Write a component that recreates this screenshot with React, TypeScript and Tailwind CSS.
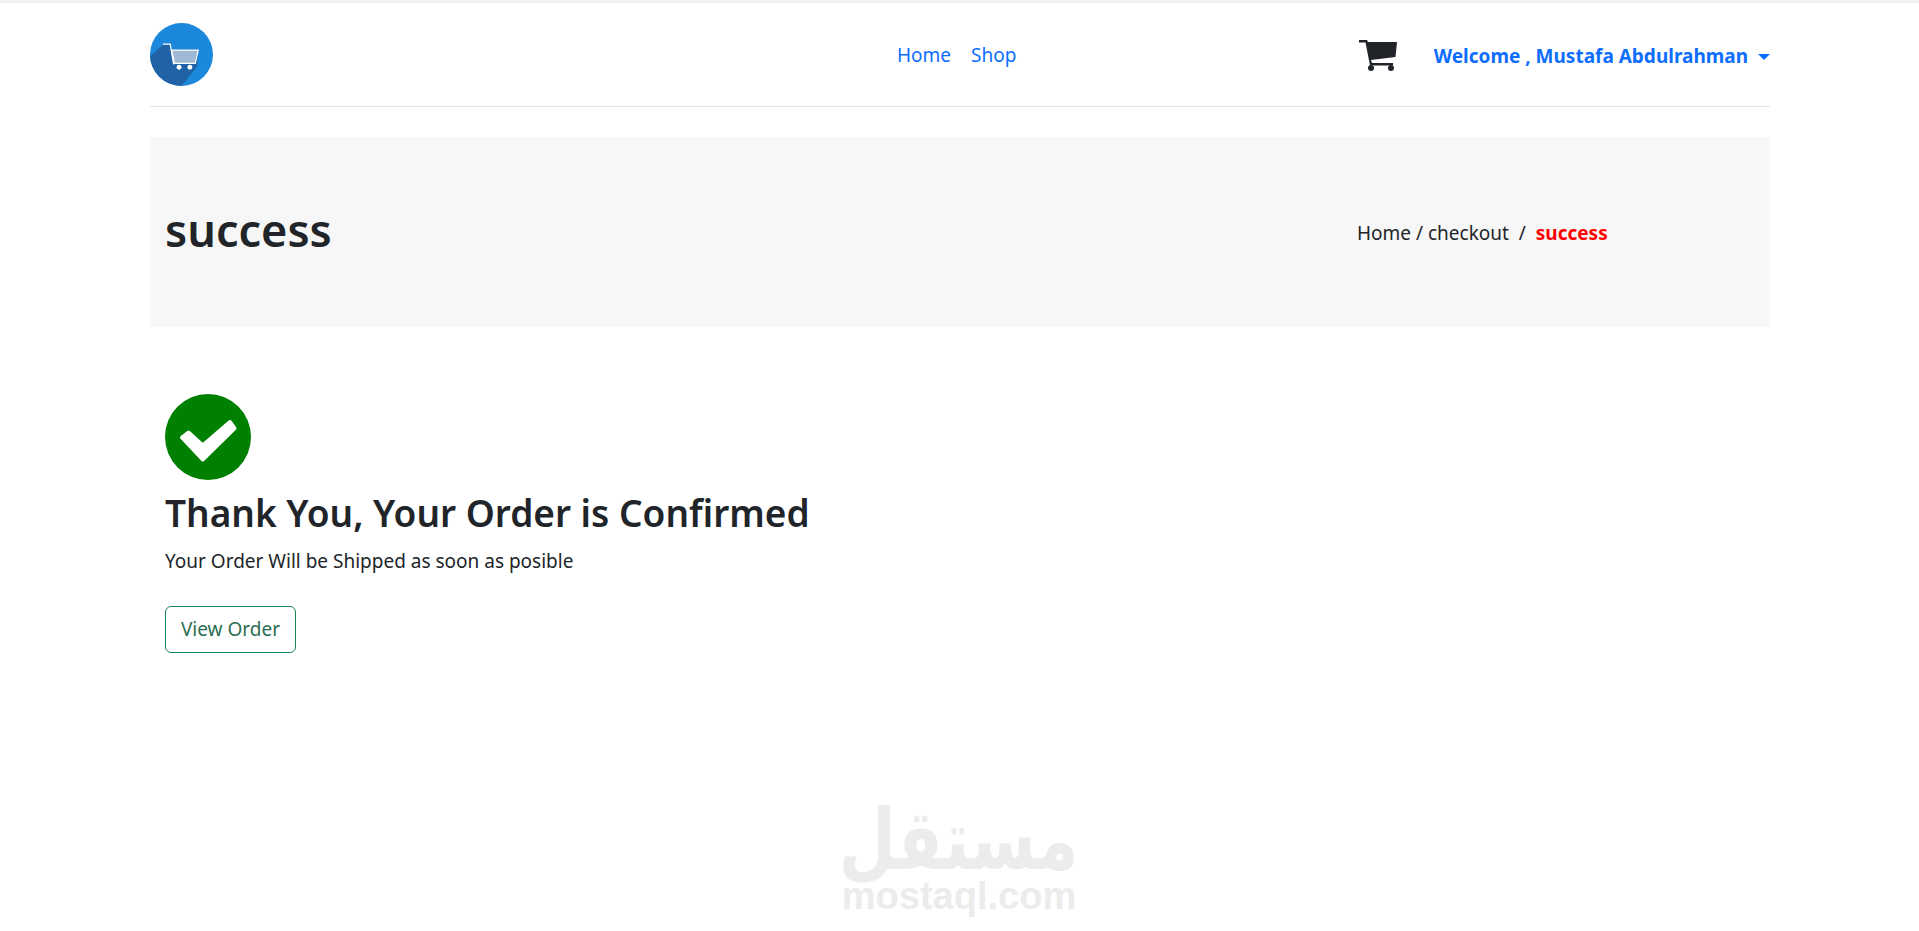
import React from 'react';

const Logo: React.FC = () => (
  <svg viewBox="0 0 64 64" className="w-[63px] h-[63px] shrink-0">
    <defs>
      <clipPath id="logo-clip">
        <circle cx="32" cy="32" r="32" />
      </clipPath>
    </defs>
    <circle cx="32" cy="32" r="32" fill="#1c88dc" />
    {/* long shadow */}
    <path d="M14 21 L0 34 L0 64 L32 64 L48 44 L48 27 L22 27 L20 21 Z" fill="#1f62a5" clipPath="url(#logo-clip)" />
    {/* cart */}
    <path d="M13 21.5 H20.5 L24 42" fill="none" stroke="#fff" strokeWidth="1.2" />
    <path d="M22 27.5 H49 L46 41 H25 Z" fill="#9db9d3" stroke="#fff" strokeWidth="1.2" />
    <circle cx="29.5" cy="45" r="2.5" fill="#fff" />
    <circle cx="40.5" cy="45" r="2.5" fill="#fff" />
  </svg>
);

const CartIcon: React.FC = () => (
  <svg viewBox="0 0 38 32" className="w-[38px] h-8 shrink-0" fill="#212529">
    <path d="M0 1 H8 L9 3 H38 L36.5 18 L12 21 L13 24 H34 V26.5 H11 L6.5 3.5 H0 Z" />
    <circle cx="12" cy="29" r="3" />
    <circle cx="32" cy="29" r="3" />
  </svg>
);

const CheckIcon: React.FC = () => (
  <svg viewBox="0 0 86 86" className="block w-[86px] h-[86px]">
    <circle cx="43" cy="43" r="43" fill="#008000" />
    <path
      d="M17 43.5 L23.5 38.5 L37.7 51.5 L65 28 L69.5 34.3 L37.7 65.5 Z"
      fill="#fff"
      stroke="#fff"
      strokeWidth="4"
      strokeLinejoin="round"
    />
  </svg>
);

const Header: React.FC = () => (
  <header className="flex items-center h-[104px] border-b border-[#e3e3e6]">
    <Logo />
    <nav className="flex gap-5 ml-[684px] mt-[2px] text-[19px] text-[#0d6efd]">
      <a href="#">Home</a>
      <a href="#">Shop</a>
    </nav>
    <div className="flex items-center ml-auto">
      <CartIcon />
      <a href="#" className="flex items-center ml-[37px] mt-[4px] text-[19px] font-bold text-[#0d6efd]">
        Welcome , Mustafa Abdulrahman
        <span className="ml-[10px] w-0 h-0 border-x-[6px] border-x-transparent border-t-[6px] border-t-[#0d6efd]"></span>
      </a>
    </div>
  </header>
);

export default function App() {
  return (
    <div className="relative h-[931px] overflow-hidden bg-white border-t-[3px] border-[#f0f0f2] font-['Noto_Sans','Open_Sans',sans-serif] text-[#212529]">
      <div className="ml-[150px] mr-[149px]">
        <Header />

        {/* page banner */}
        <section className="flex items-center justify-between h-[190px] mt-[30px] pl-[15px] bg-[#f7f7f7]">
          <h1 className="text-[45px] font-semibold pb-[4px]">success</h1>
          <div className="w-[413px] pt-[2px] text-[19px]">
            Home / checkout &nbsp;/&nbsp; <span className="font-bold text-[#ff0000]">success</span>
          </div>
        </section>

        {/* confirmation */}
        <section className="pl-[15px] pt-[67px]">
          <CheckIcon />
          <h2 className="mt-[10px] text-[37px] leading-[46px] font-semibold">Thank You, Your Order is Confirmed</h2>
          <p className="mt-[11px] text-[19px]">Your Order Will be Shipped as soon as posible</p>
          <button className="mt-[30px] w-[131px] h-[47px] border border-[#198754] rounded-md text-[19px] text-[#2a6e52]">
            View Order
          </button>
        </section>
      </div>

      {/* mostaql watermark */}
      <div className="absolute left-[843px] top-[795px] w-[232px] flex flex-col items-center text-[#ececec]">
        <div className="h-[80px] font-['DejaVu_Sans',sans-serif] font-bold text-[84px] leading-[84px] scale-x-[0.78]" dir="rtl">مستقل</div>
        <div className="font-['Liberation_Sans',sans-serif] font-bold text-[38px] leading-[36px]">mostaql.com</div>
      </div>
    </div>
  );
}
